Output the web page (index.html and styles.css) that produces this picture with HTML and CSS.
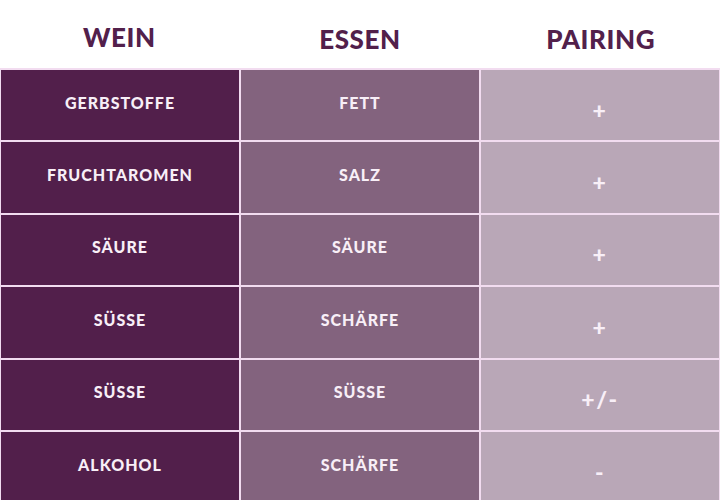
FILE: index.html
```html
<!DOCTYPE html>
<html lang="de">
<head>
<meta charset="utf-8">
<title>Wein &amp; Essen Pairing</title>
<link rel="stylesheet" href="styles.css">
</head>
<body>
<div class="pairing">
  <div class="head">
    <div class="head-cell head-wein">WEIN</div>
    <div class="head-cell">ESSEN</div>
    <div class="head-cell">PAIRING</div>
  </div>
  <div class="grid">
    <div class="cell wein">GERBSTOFFE</div>
    <div class="cell essen">FETT</div>
    <div class="cell pair">+</div>

    <div class="cell wein">FRUCHTAROMEN</div>
    <div class="cell essen">SALZ</div>
    <div class="cell pair">+</div>

    <div class="cell wein">SÄURE</div>
    <div class="cell essen">SÄURE</div>
    <div class="cell pair">+</div>

    <div class="cell wein">SÜSSE</div>
    <div class="cell essen">SCHÄRFE</div>
    <div class="cell pair">+</div>

    <div class="cell wein">SÜSSE</div>
    <div class="cell essen">SÜSSE</div>
    <div class="cell pair">+/-</div>

    <div class="cell wein">ALKOHOL</div>
    <div class="cell essen">SCHÄRFE</div>
    <div class="cell pair">-</div>
  </div>
</div>
</body>
</html>
```

FILE: styles.css
```css
html, body {
  margin: 0;
  padding: 0;
  background: #ffffff;
}

body {
  font-family: "Lato", "Liberation Sans", sans-serif;
  overflow: hidden;
}

.pairing {
  width: 720px;
}

.head {
  display: grid;
  grid-template-columns: 1fr 1fr 1fr;
  column-gap: 2px;
  height: 68px;
}

.head-cell {
  display: flex;
  align-items: center;
  justify-content: center;
  padding-top: 10px;
  box-sizing: border-box;
  font-size: 26px;
  font-weight: 900;
  letter-spacing: 0.6px;
  color: #52204b;
}

.head-wein {
  padding-top: 6px;
}

.grid {
  display: grid;
  grid-template-columns: 1fr 1fr 1fr;
  grid-auto-rows: 70.4px;
  gap: 2px;
  padding: 2px 1px 0 1px;
  background: #f2dcf0;
}

.cell {
  display: flex;
  align-items: center;
  justify-content: center;
  box-sizing: border-box;
  color: #f8eff7;
  font-weight: 900;
  font-size: 16px;
  letter-spacing: 1px;
}

.wein {
  background: #521f4b;
  padding-bottom: 6px;
}

.essen {
  background: #83637e;
  padding-bottom: 6px;
}

.pair {
  background: #b9a7b7;
  padding-top: 9px;
  font-size: 23px;
  font-weight: 900;
  letter-spacing: 1.5px;
}
```
